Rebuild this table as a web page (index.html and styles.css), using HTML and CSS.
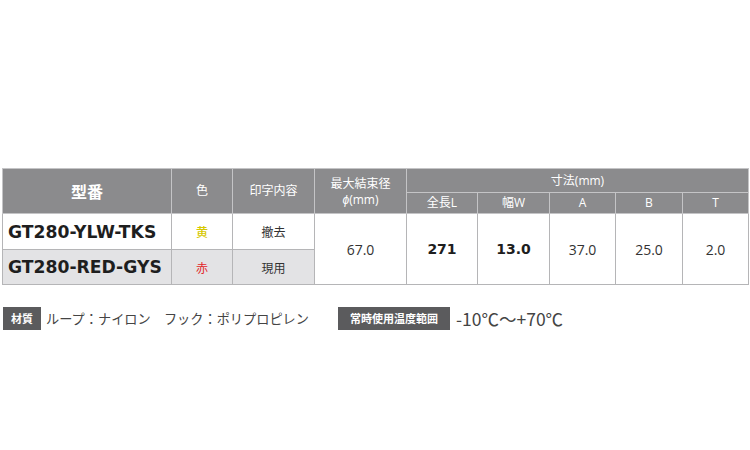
FILE: index.html
```html
<!DOCTYPE html>
<html lang="ja">
<head>
<meta charset="utf-8">
<link rel="stylesheet" href="styles.css">
</head>
<body>
<div class="page">
  <table class="spec">
    <colgroup>
      <col class="c-model"><col class="c-color"><col class="c-print"><col class="c-max">
      <col class="c-len"><col class="c-w"><col class="c-a"><col class="c-b"><col class="c-t">
    </colgroup>
    <thead>
      <tr class="h1">
        <th rowspan="2" class="th-model">型番</th>
        <th rowspan="2">色</th>
        <th rowspan="2">印字内容</th>
        <th rowspan="2" class="th-max">最大結束径<br><span class="phi">ϕ</span>(mm)</th>
        <th colspan="5">寸法(mm)</th>
      </tr>
      <tr class="h2">
        <th>全長L</th><th>幅W</th><th>A</th><th>B</th><th>T</th>
      </tr>
    </thead>
    <tbody>
      <tr class="r1">
        <td class="model">GT280-YLW-TKS</td>
        <td class="ja yellow">黄</td>
        <td class="ja">撤去</td>
        <td rowspan="2" class="num">67.0</td>
        <td rowspan="2" class="num bold">271</td>
        <td rowspan="2" class="num bold">13.0</td>
        <td rowspan="2" class="num">37.0</td>
        <td rowspan="2" class="num">25.0</td>
        <td rowspan="2" class="num">2.0</td>
      </tr>
      <tr class="r2">
        <td class="model">GT280-RED-GYS</td>
        <td class="ja red">赤</td>
        <td class="ja">現用</td>
      </tr>
    </tbody>
  </table>
  <div class="notes">
    <span class="tag">材質</span>
    <span class="note">ループ：ナイロン　フック：ポリプロピレン</span>
    <span class="tag tag2">常時使用温度範囲</span>
    <span class="temp">-10℃～+70℃</span>
  </div>
</div>
</body>
</html>
```
FILE: styles.css
```css
html, body {
  margin: 0;
  padding: 0;
  background: #ffffff;
}
body {
  font-family: "Open Sans", "Noto Sans CJK JP", sans-serif;
  color: #333;
}
.page {
  padding-top: 168px;
  padding-left: 2px;
  width: 746px;
}
.spec {
  border-collapse: collapse;
  table-layout: fixed;
  width: 746px;
}
.c-model { width: 169px; }
.c-color { width: 61px; }
.c-print { width: 82px; }
.c-max { width: 92px; }
.c-len { width: 71px; }
.c-w { width: 72px; }
.c-a { width: 66px; }
.c-b { width: 67px; }
.c-t { width: 66px; }

.spec th {
  background: #8b8b8d;
  color: #fff;
  font-weight: normal;
  font-size: 12px;
  font-family: "Open Sans", "Noto Sans CJK JP", sans-serif;
  border: 1px solid #c4c4c6;
  padding: 0;
  text-align: center;
  line-height: 14px;
}
.spec .h1 th { height: 23px; }
.spec .h2 th { height: 20px; }
.spec th.th-model {
  font-size: 16px;
  font-weight: bold;
  font-family: "Noto Sans CJK JP", sans-serif;
}
.spec th.th-max {
  line-height: 16px;
  vertical-align: top;
  padding-top: 7px;
}
.phi { font-style: italic; }
.spec td {
  border: 1px solid #b5b5b7;
  border-top: 1px solid #c8c8ca;
  padding: 0;
  text-align: center;
  font-size: 14px;
  color: #333;
}
.spec .r1 td { height: 35px; }
.spec .r2 td { height: 34px; }
.spec .r2 td.model, .spec .r2 td.ja { background: #e3e3e5; }
.spec td.model {
  text-align: left;
  padding-left: 5px;
  font-family: "DejaVu Sans", sans-serif;
  font-size: 17.2px;
  font-weight: bold;
  color: #1e1e1e;
}
.spec td.ja {
  font-family: "Noto Sans CJK JP", sans-serif;
  font-size: 12px;
}
.spec td.yellow { color: #d6c800; font-weight: 500; }
.spec td.red { color: #e2262a; }
.spec td.num { font-size: 14px; }
.spec td.bold {
  font-family: "DejaVu Sans", sans-serif;
  font-weight: bold;
  color: #1e1e1e;
}

.notes {
  display: flex;
  align-items: center;
  margin-top: 21px;
  padding-left: 1px;
  height: 24px;
}
.tag {
  background: #5b5b5d;
  color: #fff;
  font-family: "Noto Sans CJK JP", sans-serif;
  font-weight: bold;
  font-size: 11px;
  height: 23px;
  line-height: 23px;
  padding: 0 8px;
  box-sizing: border-box;
}
.note {
  font-family: "Noto Sans CJK JP", sans-serif;
  font-size: 13.2px;
  color: #444;
  margin-left: 5px;
}
.tag2 {
  margin-left: 29px;
  width: 112px;
  text-align: center;
  padding: 0;
}
.temp {
  font-family: "Noto Sans CJK JP", sans-serif;
  font-size: 17.5px;
  color: #444;
  margin-left: 6px;
}
```
